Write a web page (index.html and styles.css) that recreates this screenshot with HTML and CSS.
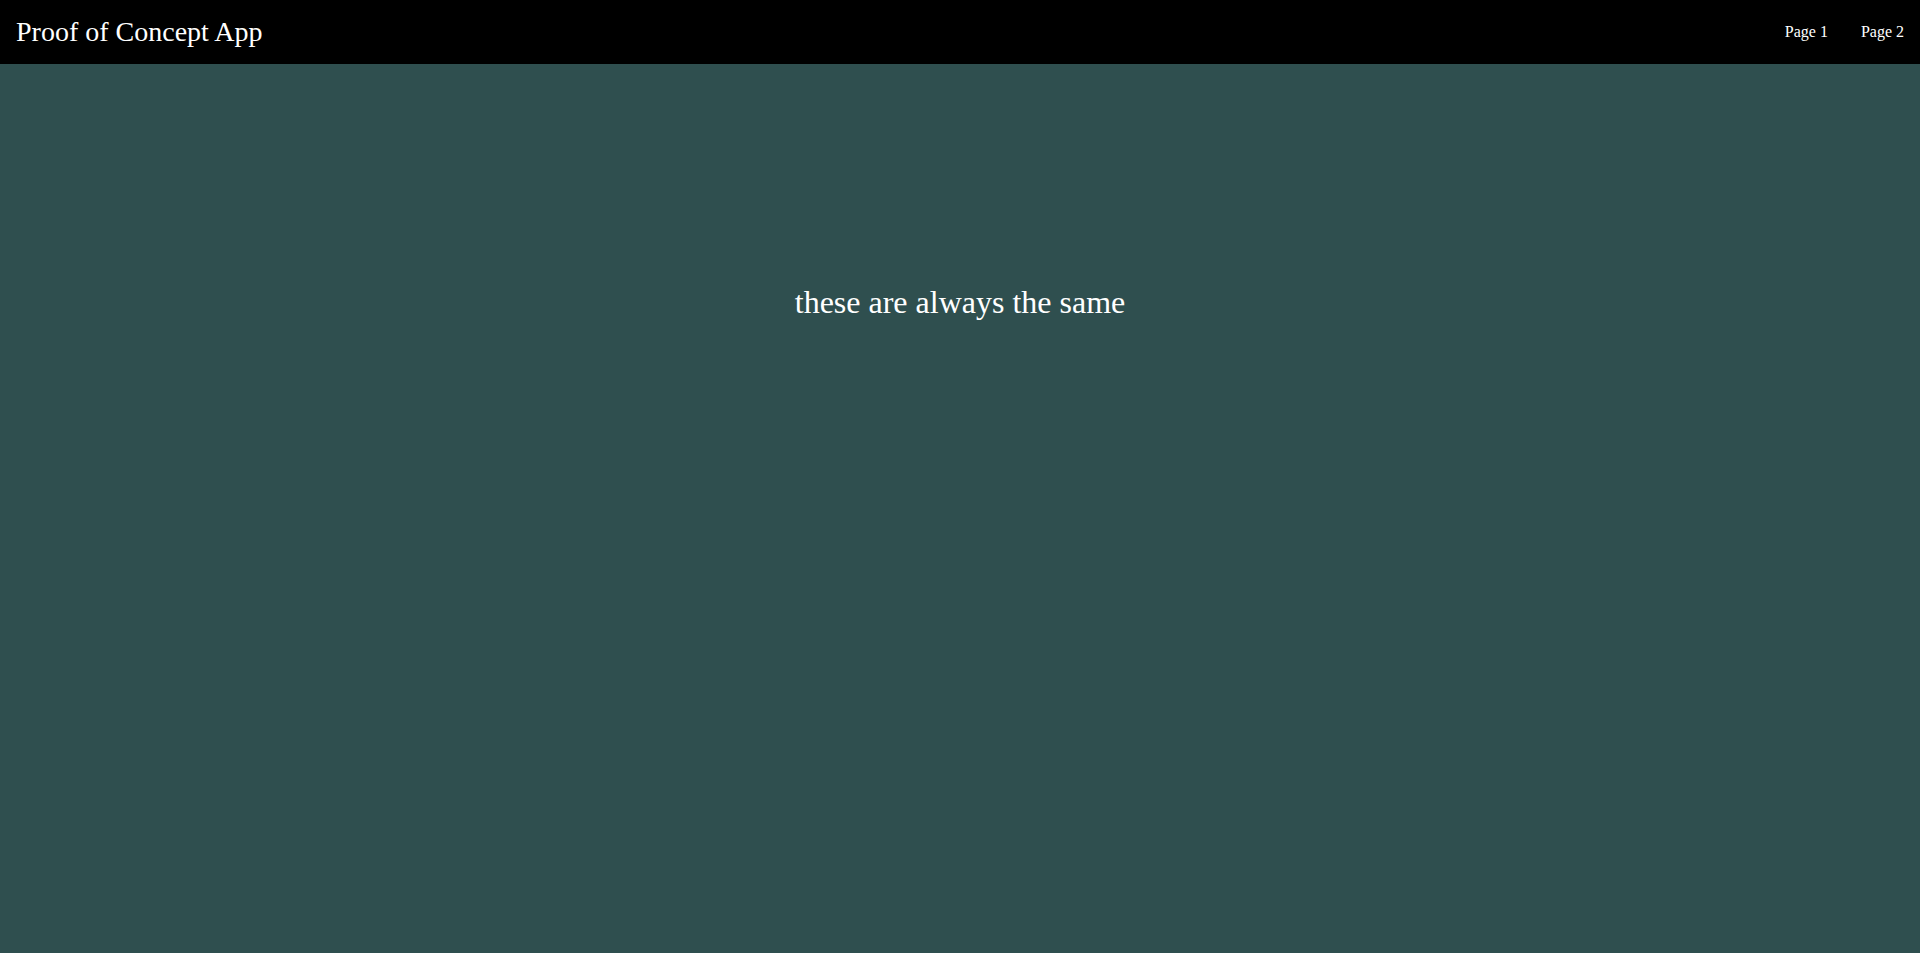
FILE: index.html
```html
<!DOCTYPE html>
<html lang="en">
<head>
<meta charset="utf-8">
<title>Proof of Concept App</title>
<link rel="stylesheet" href="styles.css">
</head>
<body>
<header class="topbar">
  <div class="brand">Proof of Concept App</div>
  <nav class="nav">
    <a class="nav-link" href="#">Page 1</a>
    <a class="nav-link" href="#">Page 2</a>
  </nav>
</header>
<main class="content">
  <p class="message">these are always the same</p>
</main>
</body>
</html>
```

FILE: styles.css
```css
html, body {
  margin: 0;
  padding: 0;
  height: 100%;
}
body {
  background: #2f4f4f;
  color: #ffffff;
  font-family: "Liberation Serif", "Times New Roman", serif;
  display: flex;
  flex-direction: column;
}
.topbar {
  height: 64px;
  background: #000000;
  display: flex;
  align-items: center;
  justify-content: space-between;
  padding: 0 16px;
  flex-shrink: 0;
}
.brand {
  font-size: 28px;
  line-height: 1.15;
}
.nav {
  display: flex;
  gap: 33px;
  align-items: center;
}
.nav-link {
  color: #ffffff;
  text-decoration: none;
  font-size: 16px;
  line-height: 1.15;
}
.content {
  flex: 1;
  padding-top: 220px;
  text-align: center;
}
.message {
  margin: 0;
  font-size: 32px;
  line-height: 1.15;
}
```
